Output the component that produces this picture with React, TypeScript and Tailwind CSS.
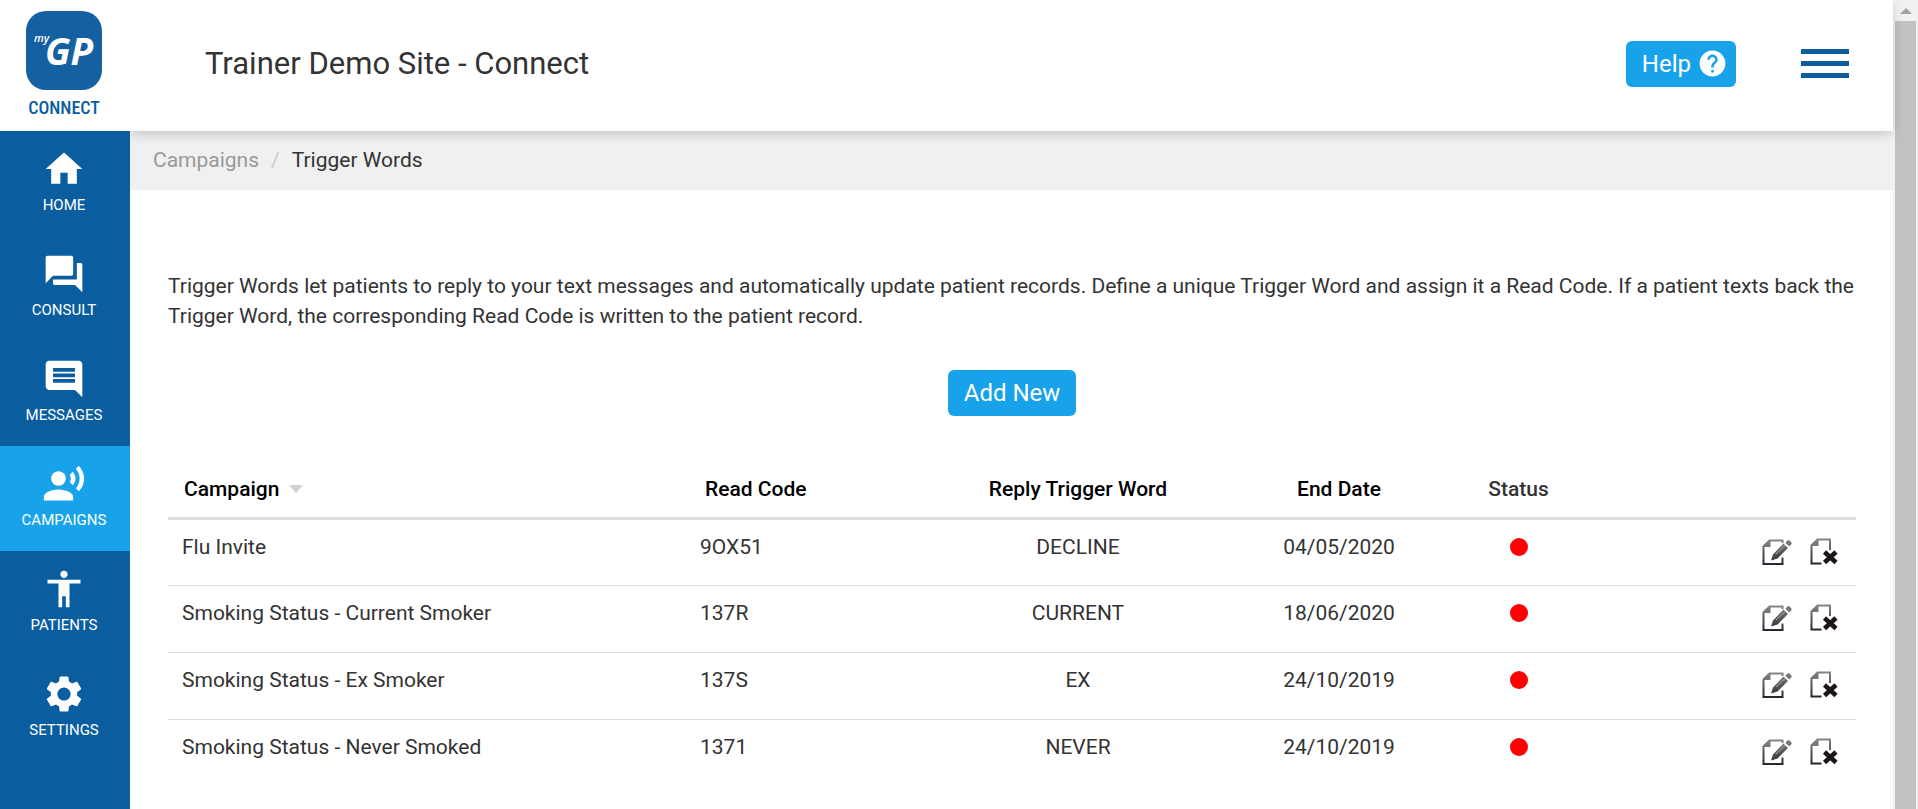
import React from "react";
import {
  MdAccessibility,
  MdComment,
  MdForum,
  MdHelp,
  MdHome,
  MdRecordVoiceOver,
  MdSettings,
} from "react-icons/md";
import type { IconType } from "react-icons";

interface INavItem {
  label: string;
  icon: IconType;
  active?: boolean;
}

interface ITriggerWord {
  campaign: string;
  readCode: string;
  word: string;
  endDate: string;
}

const navItems: INavItem[] = [
  { label: "HOME", icon: MdHome },
  { label: "CONSULT", icon: MdForum },
  { label: "MESSAGES", icon: MdComment },
  { label: "CAMPAIGNS", icon: MdRecordVoiceOver, active: true },
  { label: "PATIENTS", icon: MdAccessibility },
  { label: "SETTINGS", icon: MdSettings },
];

const triggerWords: ITriggerWord[] = [
  { campaign: "Flu Invite", readCode: "9OX51", word: "DECLINE", endDate: "04/05/2020" },
  { campaign: "Smoking Status - Current Smoker", readCode: "137R", word: "CURRENT", endDate: "18/06/2020" },
  { campaign: "Smoking Status - Ex Smoker", readCode: "137S", word: "EX", endDate: "24/10/2019" },
  { campaign: "Smoking Status - Never Smoked", readCode: "1371", word: "NEVER", endDate: "24/10/2019" },
];

const Logo: React.FC = () => (
  <a href="#" className="flex h-[131px] flex-col items-center bg-white pt-[11px] pr-0.5">
    <svg width="76" height="79" viewBox="0 0 76 79" aria-label="myGP" role="img">
      <rect width="76" height="79" rx="20" fill="#1560a1" />
      <text x="8" y="31" fill="#fff" fontFamily="'Open Sans', sans-serif" fontStyle="italic">
        <tspan fontSize="11" fontWeight="600">
          my
        </tspan>
        <tspan x="19" y="54" fontSize="37" fontWeight="700">
          GP
        </tspan>
      </text>
    </svg>
    <span className="mt-1 font-['Roboto_Condensed','Liberation_Sans_Narrow',Roboto,sans-serif] text-[18px] leading-7 font-medium text-[#0a5ea0]">
      CONNECT
    </span>
  </a>
);

const Sidebar: React.FC = () => (
  <aside className="relative z-20 w-[130px] shrink-0 bg-[#0a5ea0]">
    <Logo />
    <nav>
      {navItems.map(({ label, icon: Icon, active }) => (
        <a
          key={label}
          href="#"
          className={`flex h-[105px] flex-col items-center pt-4 pr-0.5 text-[15px] leading-6 text-white ${
            active ? "bg-[#17a2ea]" : ""
          }`}
        >
          <Icon size={44} />
          <span className="mt-0.5">{label}</span>
        </a>
      ))}
    </nav>
  </aside>
);

const Header: React.FC = () => (
  <header className="relative z-10 flex h-[131px] items-center bg-white pr-11 pb-1 pl-[75px] shadow-[0_4px_12px_-2px_rgba(0,0,0,0.22)]">
    <h1 className="grow text-[31px] leading-10 text-[#333]">Trainer Demo Site - Connect</h1>
    <button
      type="button"
      className="flex h-[46px] items-center gap-1.5 rounded-[6px] bg-[#17a2ea] pr-2 pl-4 text-[24px] text-white"
    >
      Help
      <MdHelp size={31} />
    </button>
    <button type="button" aria-label="Menu" className="ml-[65px] flex flex-col gap-[7px]">
      <span className="h-[5px] w-12 bg-[#0a5ea0]" />
      <span className="h-[5px] w-12 bg-[#0a5ea0]" />
      <span className="h-[5px] w-12 bg-[#0a5ea0]" />
    </button>
  </header>
);

const EditIcon: React.FC = () => (
  <svg width="30" height="27" viewBox="0 0 30 27" fill="none">
    <defs>
      <linearGradient id="editInk" gradientUnits="userSpaceOnUse" x1="0" y1="0" x2="0" y2="27">
        <stop offset="0" stopColor="#8a8a8a" />
        <stop offset="1" stopColor="#20202a" />
      </linearGradient>
    </defs>
    <path d="M20.500 4V1.500H7.500L1.500 7.500V25H20.500V18.500" stroke="url(#editInk)" strokeWidth="2" />
    <path d="M8.500 1.500V8H1.500Z" fill="#777" />
    <path d="M9 21.500L11 15.500L21.500 4.500L26 9L15.500 19.500Z" fill="url(#editInk)" />
    <path d="M14 15L23 6.500" stroke="#aaa" strokeWidth="1" />
    <path d="M23.300 3.700L25.500 1.500Q26.500 .7 27.500 1.500L29.300 3.300Q30 4.300 29.300 5.300L27.200 7.500Z" fill="#777" />
  </svg>
);

const DeleteIcon: React.FC = () => (
  <svg width="28" height="28" viewBox="0 0 28 28" fill="none">
    <defs>
      <linearGradient id="deleteInk" gradientUnits="userSpaceOnUse" x1="0" y1="0" x2="0" y2="27">
        <stop offset="0" stopColor="#8a8a8a" />
        <stop offset="1" stopColor="#20202a" />
      </linearGradient>
    </defs>
    <path d="M20 12V1.500H7.500L1.500 7.500V25.500H11.500" stroke="url(#deleteInk)" strokeWidth="2" />
    <path d="M8.500 1.500V8H1.500Z" fill="#777" />
    <path d="M14.500 14L26 24.500M26 14L14.500 24.500" stroke="#1d1518" strokeWidth="4.600" />
  </svg>
);

const TriggerWordsTable: React.FC = () => (
  <table className="mt-11 w-full table-fixed border-collapse text-[21px] leading-[30px] text-[#333]">
    <colgroup>
      <col className="w-[518px]" />
      <col className="w-[239px]" />
      <col className="w-[306px]" />
      <col className="w-[216px]" />
      <col className="w-[143px]" />
      <col className="w-[266px]" />
    </colgroup>
    <thead>
      <tr className="border-b-[3px] border-[#ddd] text-black">
        <th className="px-4 pt-3.5 pb-[13px] text-left font-medium">
          <button type="button" className="flex items-center gap-2.5">
            Campaign
            <svg width="14" height="8" viewBox="0 0 14 8">
              <path d="M0 0H14L7 8Z" fill="#d0d0d0" />
            </svg>
          </button>
        </th>
        <th className="px-[19px] pt-3.5 pb-[13px] text-left font-medium">Read Code</th>
        <th className="pt-3.5 pb-[13px] font-medium">Reply Trigger Word</th>
        <th className="pt-3.5 pb-[13px] font-medium">End Date</th>
        <th className="pt-3.5 pb-[13px] font-medium text-[#333]">Status</th>
        <th aria-label="Actions" />
      </tr>
    </thead>
    <tbody>
      {triggerWords.map((row) => (
        <tr key={row.campaign} className="h-[67px] border-b border-[#ddd] align-top last:border-b-0">
          <td className="px-3.5 pt-3">{row.campaign}</td>
          <td className="px-3.5 pt-3">{row.readCode}</td>
          <td className="pt-3 text-center">{row.word}</td>
          <td className="pt-3 text-center">{row.endDate}</td>
          <td className="pt-[18px]">
            <span className="mx-auto block size-[18px] rounded-full bg-[#fe0000]" role="img" aria-label="Ended" />
          </td>
          <td className="pt-[18px]">
            <div className="flex justify-end gap-[18px] pr-[18px]">
              <button type="button" aria-label={`Edit ${row.campaign}`}>
                <EditIcon />
              </button>
              <button type="button" aria-label={`Delete ${row.campaign}`}>
                <DeleteIcon />
              </button>
            </div>
          </td>
        </tr>
      ))}
    </tbody>
  </table>
);

const ScrollTrack: React.FC = () => (
  <div aria-hidden="true" className="flex w-[25px] shrink-0 flex-col items-center bg-[#f1f1f1]">
    <div className="flex h-[21px] items-center">
      <svg width="12" height="6" viewBox="0 0 12 6">
        <path d="M0 6H12L6 0Z" fill="#a3a3a3" />
      </svg>
    </div>
    <div className="w-[21px] grow bg-[#c1c1c1]" />
  </div>
);

const App: React.FC = () => {
  return (
    <div className="flex min-h-screen bg-white font-[Roboto,sans-serif]">
      <Sidebar />
      <div className="min-w-0 grow">
        <Header />
        <div className="flex h-[59px] items-center gap-3 bg-[#f0f0f0] px-[23px] pb-0.5 text-[21px] leading-[30px]">
          <a href="#" className="text-[#999]">
            Campaigns
          </a>
          <span className="text-[#ccc]">/</span>
          <span className="text-[#333]">Trigger Words</span>
        </div>
        <main className="pt-[81px] pr-[37px] pl-[38px]">
          <p className="text-[21px] leading-[30px] text-[#333]">
            Trigger Words let patients to reply to your text messages and automatically update patient records. Define a
            unique Trigger Word and assign it a Read Code. If a patient texts back the Trigger Word, the corresponding
            Read Code is written to the patient record.
          </p>
          <div className="mt-[39px] flex justify-center">
            <button type="button" className="h-[46px] rounded-[6px] bg-[#17a2ea] px-4 text-[24px] text-white">
              Add New
            </button>
          </div>
          <TriggerWordsTable />
        </main>
      </div>
      <ScrollTrack />
    </div>
  );
};

export default App;
